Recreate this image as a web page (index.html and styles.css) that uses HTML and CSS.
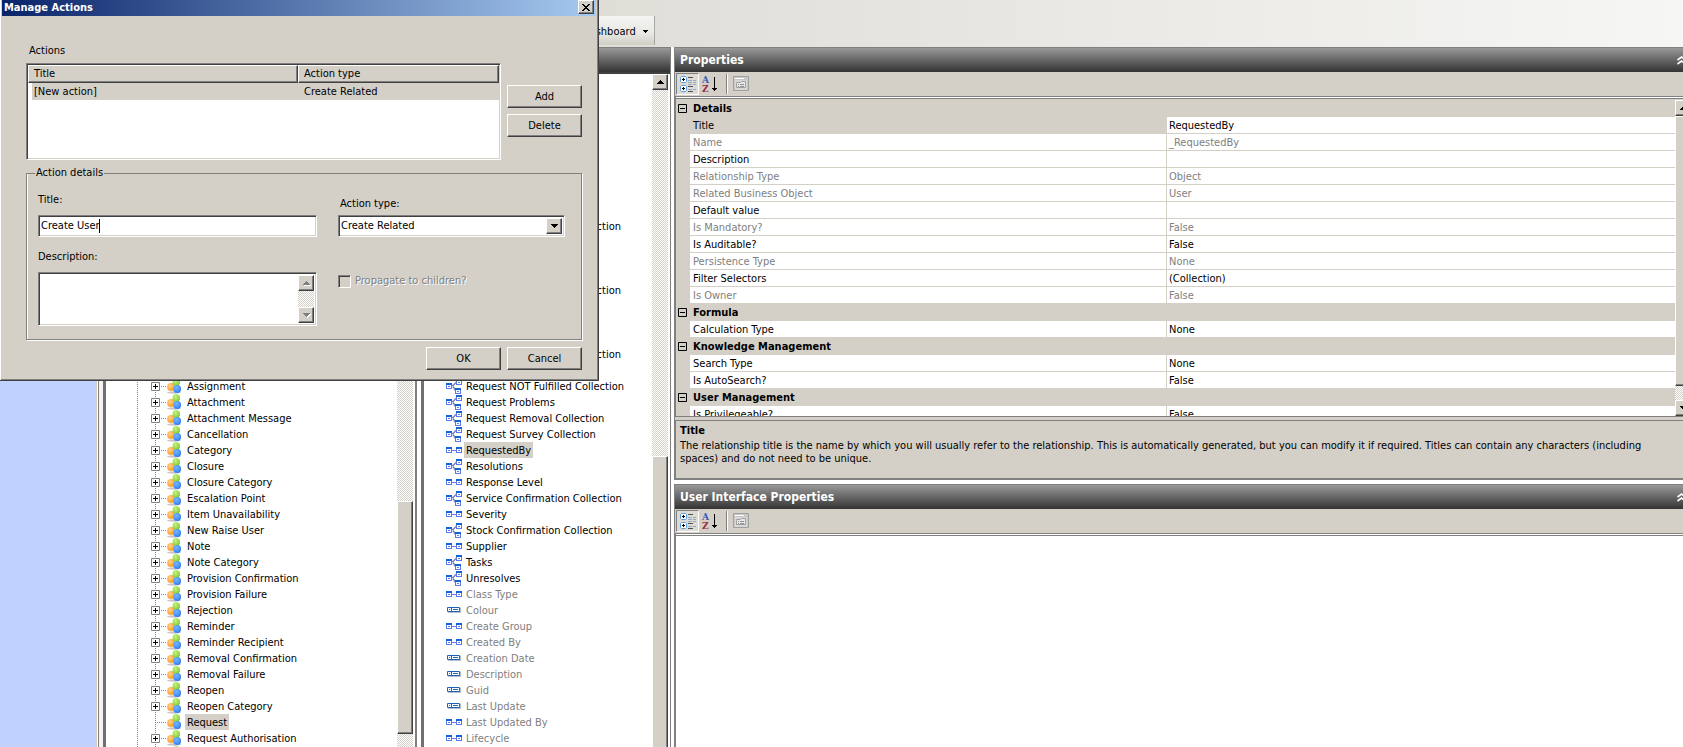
FILE: index.html
```html
<!DOCTYPE html>
<html lang="en">
<head>
<meta charset="utf-8">
<title>Manage Actions</title>
<link rel="stylesheet" href="styles.css">
</head>
<body>
<svg class="defs" aria-hidden="true">
  <defs>
    <radialGradient id="g-green" cx="40%" cy="35%" r="70%"><stop offset="0" stop-color="#c8f080"/><stop offset="1" stop-color="#7ccc2c"/></radialGradient>
    <radialGradient id="g-orange" cx="40%" cy="35%" r="70%"><stop offset="0" stop-color="#ffd088"/><stop offset="1" stop-color="#f8981c"/></radialGradient>
    <radialGradient id="g-blue" cx="40%" cy="35%" r="70%"><stop offset="0" stop-color="#7cb8ff"/><stop offset="1" stop-color="#2c7cf0"/></radialGradient>
    <symbol id="plus" viewBox="0 0 9 9"><path fill="#fff" stroke="#808080" d="M.5.5h8v8h-8z"/><path stroke="#000" d="M2 4.500h5M4.500 2v5"/></symbol>
    <symbol id="minus" viewBox="0 0 9 9"><path fill="none" stroke="#000" d="M.5.5h8v8h-8z"/><path stroke="#000" d="M2 4.500h5"/></symbol>
    <symbol id="balls" viewBox="0 0 16 16"><ellipse cx="8" cy="14.500" rx="7" ry="1.200" fill="#c4c4c8"/><circle cx="5" cy="9" r="3.900" fill="url(#g-orange)"/><circle cx="10.300" cy="4" r="3.800" fill="url(#g-green)"/><circle cx="11.200" cy="11" r="3.900" fill="url(#g-blue)"/></symbol>
    <symbol id="node" viewBox="0 0 6 6"><path fill="#5b7be0" d="M0 0h6v6H0z"/><path fill="#1464d0" d="M0 0h6v2H0z"/><path fill="#fff" d="M1 2h4v3H1z"/><path fill="#5b7be0" d="M2 3h2v1H2z"/></symbol>
    <symbol id="many" viewBox="0 0 16 16"><path fill="none" stroke="#7888c8" stroke-width="1.500" d="M6 7.500h1L10.500 4M7 8.500l2.500 4"/><use href="#node" x="0" y="5" width="6" height="6"/><use href="#node" x="10" y="1" width="6" height="6"/><use href="#node" x="9" y="10" width="6" height="6"/></symbol>
    <symbol id="one" viewBox="0 0 16 16"><path stroke="#5b7be0" d="M6 8.500h4"/><use href="#node" x="0" y="5" width="6" height="6"/><use href="#node" x="10" y="5" width="6" height="6"/></symbol>
    <symbol id="field" viewBox="0 0 16 16"><path fill="#b8bcc4" d="M2 6h13v5H2z"/><path fill="#fff" stroke="#1c68b0" d="M1.500 5.500h12v4h-12zM5.500 6v3"/><path stroke="#1c68b0" d="M3 7.500h1M7 7.500h5"/></symbol>
    <symbol id="cat" viewBox="0 0 18 18"><path fill="#fff" stroke="#5c9cdc" d="M2.500 1.500h4l1 1v4l-1 1h-4l-1-1v-4zM2.500 10.500h4l1 1v4l-1 1h-4l-1-1v-4z"/><path stroke="#000" d="M3 4.500h3M4.500 3v3M3 13.500h3M4.500 12v3"/><path stroke="#505050" d="M9 2.500h5M9 11.500h5M9 16.500h5"/><path stroke="#8cacc8" stroke-dasharray="4 1" d="M9 5.500h8M9 7.500h8M9 9.500h8M9 14.500h8"/></symbol>
    <symbol id="page" viewBox="0 0 16 16"><path fill="#c8c8c8" stroke="#a0a0a0" d="M.5.5h15v14H.5z"/><path fill="#d8d8d8" d="M2 4h12v10H2z"/><path fill="#e8e8e8" stroke="#a0a0a0" d="M3.500 7.500V6.500h4l1-1h4v6h-9z"/><path stroke="#fff" d="M2 2.500h9"/><path stroke="#909090" d="M5 8.500h1M7 8.500h4M5 10.500h1M7 10.500h4"/></symbol>
    <symbol id="up" viewBox="0 0 7 4"><path d="M3 0h1v1h1v1h1v1h1v1H0V3h1V2h1V1h1z"/></symbol>
    <symbol id="down" viewBox="0 0 7 4"><path d="M3 4h1V3h1V2h1V1h1V0H0v1h1v1h1v1h1z"/></symbol>
    <symbol id="chev" viewBox="0 0 9 9"><path fill="none" stroke="#fff" stroke-width="1.600" d="M.5 4l4-3 4 3M.5 8l4-3 4 3"/></symbol>
  </defs>
</svg>

<header class="topbar">
  <button class="tool-menu" type="button"><span>Dashboard</span><svg class="caret" viewBox="0 0 5 3"><path d="M0 0h5v1H4v1H3v1H2V2H1V1H0z"/></svg></button>
</header>

<main class="workspace">
  <nav class="outlook-bar" aria-label="Modules"></nav>

  <section class="pane tree-pane" aria-label="Business objects">
    <div class="pane-head"></div>
    <div class="scroller">
      <ul class="tree">
        <li><svg class="exp"><use href="#plus"/></svg><svg class="ico"><use href="#balls"/></svg><span>Assignment</span></li>
        <li><svg class="exp"><use href="#plus"/></svg><svg class="ico"><use href="#balls"/></svg><span>Attachment</span></li>
        <li><svg class="exp"><use href="#plus"/></svg><svg class="ico"><use href="#balls"/></svg><span>Attachment Message</span></li>
        <li><svg class="exp"><use href="#plus"/></svg><svg class="ico"><use href="#balls"/></svg><span>Cancellation</span></li>
        <li><svg class="exp"><use href="#plus"/></svg><svg class="ico"><use href="#balls"/></svg><span>Category</span></li>
        <li><svg class="exp"><use href="#plus"/></svg><svg class="ico"><use href="#balls"/></svg><span>Closure</span></li>
        <li><svg class="exp"><use href="#plus"/></svg><svg class="ico"><use href="#balls"/></svg><span>Closure Category</span></li>
        <li><svg class="exp"><use href="#plus"/></svg><svg class="ico"><use href="#balls"/></svg><span>Escalation Point</span></li>
        <li><svg class="exp"><use href="#plus"/></svg><svg class="ico"><use href="#balls"/></svg><span>Item Unavailability</span></li>
        <li><svg class="exp"><use href="#plus"/></svg><svg class="ico"><use href="#balls"/></svg><span>New Raise User</span></li>
        <li><svg class="exp"><use href="#plus"/></svg><svg class="ico"><use href="#balls"/></svg><span>Note</span></li>
        <li><svg class="exp"><use href="#plus"/></svg><svg class="ico"><use href="#balls"/></svg><span>Note Category</span></li>
        <li><svg class="exp"><use href="#plus"/></svg><svg class="ico"><use href="#balls"/></svg><span>Provision Confirmation</span></li>
        <li><svg class="exp"><use href="#plus"/></svg><svg class="ico"><use href="#balls"/></svg><span>Provision Failure</span></li>
        <li><svg class="exp"><use href="#plus"/></svg><svg class="ico"><use href="#balls"/></svg><span>Rejection</span></li>
        <li><svg class="exp"><use href="#plus"/></svg><svg class="ico"><use href="#balls"/></svg><span>Reminder</span></li>
        <li><svg class="exp"><use href="#plus"/></svg><svg class="ico"><use href="#balls"/></svg><span>Reminder Recipient</span></li>
        <li><svg class="exp"><use href="#plus"/></svg><svg class="ico"><use href="#balls"/></svg><span>Removal Confirmation</span></li>
        <li><svg class="exp"><use href="#plus"/></svg><svg class="ico"><use href="#balls"/></svg><span>Removal Failure</span></li>
        <li><svg class="exp"><use href="#plus"/></svg><svg class="ico"><use href="#balls"/></svg><span>Reopen</span></li>
        <li><svg class="exp"><use href="#plus"/></svg><svg class="ico"><use href="#balls"/></svg><span>Reopen Category</span></li>
        <li><svg class="exp"></svg><svg class="ico"><use href="#balls"/></svg><span class="picked">Request</span></li>
        <li><svg class="exp"><use href="#plus"/></svg><svg class="ico"><use href="#balls"/></svg><span>Request Authorisation</span></li>
        <li><svg class="exp"></svg><svg class="ico"><use href="#balls"/></svg></li>
      </ul>
      <div class="bar tree-bar"><div class="thumb"></div></div>
    </div>
  </section>

  <section class="pane attr-pane" aria-label="Attributes">
    <div class="pane-head"></div>
    <div class="scroller">
      <ul class="attrs">
        <li class="far">Collection</li>
        <li class="far">Collection</li>
        <li class="far">Collection</li>
        <li class="skip"><svg class="ico"><use href="#many"/></svg><span>Request NOT Fulfilled Collection</span></li>
        <li><svg class="ico"><use href="#many"/></svg><span>Request Problems</span></li>
        <li><svg class="ico"><use href="#many"/></svg><span>Request Removal Collection</span></li>
        <li><svg class="ico"><use href="#many"/></svg><span>Request Survey Collection</span></li>
        <li><svg class="ico"><use href="#one"/></svg><span class="picked">RequestedBy</span></li>
        <li><svg class="ico"><use href="#many"/></svg><span>Resolutions</span></li>
        <li><svg class="ico"><use href="#one"/></svg><span>Response Level</span></li>
        <li><svg class="ico"><use href="#many"/></svg><span>Service Confirmation Collection</span></li>
        <li><svg class="ico"><use href="#one"/></svg><span>Severity</span></li>
        <li><svg class="ico"><use href="#many"/></svg><span>Stock Confirmation Collection</span></li>
        <li><svg class="ico"><use href="#one"/></svg><span>Supplier</span></li>
        <li><svg class="ico"><use href="#many"/></svg><span>Tasks</span></li>
        <li><svg class="ico"><use href="#many"/></svg><span>Unresolves</span></li>
        <li class="dim"><svg class="ico"><use href="#one"/></svg><span>Class Type</span></li>
        <li class="dim"><svg class="ico"><use href="#field"/></svg><span>Colour</span></li>
        <li class="dim"><svg class="ico"><use href="#one"/></svg><span>Create Group</span></li>
        <li class="dim"><svg class="ico"><use href="#one"/></svg><span>Created By</span></li>
        <li class="dim"><svg class="ico"><use href="#field"/></svg><span>Creation Date</span></li>
        <li class="dim"><svg class="ico"><use href="#field"/></svg><span>Description</span></li>
        <li class="dim"><svg class="ico"><use href="#field"/></svg><span>Guid</span></li>
        <li class="dim"><svg class="ico"><use href="#field"/></svg><span>Last Update</span></li>
        <li class="dim"><svg class="ico"><use href="#one"/></svg><span>Last Updated By</span></li>
        <li class="dim"><svg class="ico"><use href="#one"/></svg><span>Lifecycle</span></li>
      </ul>
      <div class="bar attr-bar"><button class="arrow" type="button" aria-label="Scroll up"><svg class="tri"><use href="#up"/></svg></button><div class="thumb"></div></div>
    </div>
  </section>

  <div class="right">
    <section class="props">
      <h2 class="pane-head titled"><span>Properties</span><svg class="chev"><use href="#chev"/></svg></h2>
      <div class="toolbar">
        <button class="tb on" type="button" aria-label="Categorized"><svg class="i18"><use href="#cat"/></svg></button>
        <button class="tb" type="button" aria-label="Alphabetical"><svg class="i18" viewBox="0 0 18 18"><text class="az-a" x="0" y="8">A</text><text class="az-z" x="0" y="17">Z</text><path d="M12 2h1v11h2v1h-1v1h-1v1h-1v-1h-1v-1h-1v-1h2z"/></svg></button>
        <span class="sep"></span>
        <button class="tb" type="button" disabled aria-label="Property pages"><svg class="i16"><use href="#page"/></svg></button>
      </div>
      <div class="gridbox">
        <table class="pgrid">
          <colgroup><col class="c-gut"><col class="c-name"><col></colgroup>
          <tr class="cat"><td><svg class="exp"><use href="#minus"/></svg></td><th colspan="2">Details</th></tr>
          <tr class="sel"><td></td><td>Title</td><td>RequestedBy</td></tr>
          <tr class="dim"><td></td><td>Name</td><td>_RequestedBy</td></tr>
          <tr><td></td><td>Description</td><td></td></tr>
          <tr class="dim"><td></td><td>Relationship Type</td><td>Object</td></tr>
          <tr class="dim"><td></td><td>Related Business Object</td><td>User</td></tr>
          <tr><td></td><td>Default value</td><td></td></tr>
          <tr class="dim"><td></td><td>Is Mandatory?</td><td>False</td></tr>
          <tr><td></td><td>Is Auditable?</td><td>False</td></tr>
          <tr class="dim"><td></td><td>Persistence Type</td><td>None</td></tr>
          <tr><td></td><td>Filter Selectors</td><td>(Collection)</td></tr>
          <tr class="dim"><td></td><td>Is Owner</td><td>False</td></tr>
          <tr class="cat"><td><svg class="exp"><use href="#minus"/></svg></td><th colspan="2">Formula</th></tr>
          <tr><td></td><td>Calculation Type</td><td>None</td></tr>
          <tr class="cat"><td><svg class="exp"><use href="#minus"/></svg></td><th colspan="2">Knowledge Management</th></tr>
          <tr><td></td><td>Search Type</td><td>None</td></tr>
          <tr><td></td><td>Is AutoSearch?</td><td>False</td></tr>
          <tr class="cat"><td><svg class="exp"><use href="#minus"/></svg></td><th colspan="2">User Management</th></tr>
          <tr><td></td><td>Is Privilegeable?</td><td>False</td></tr>
        </table>
        <div class="bar grid-bar"><button class="arrow" type="button" aria-label="Scroll up"><svg class="tri"><use href="#up"/></svg></button><div class="thumb"></div><button class="arrow" type="button" aria-label="Scroll down"><svg class="tri"><use href="#down"/></svg></button></div>
      </div>
      <div class="help">
        <h3>Title</h3>
        <p>The relationship title is the name by which you will usually refer to the relationship. This is automatically generated, but you can modify it if required. Titles can contain any characters (including spaces) and do not need to be unique.</p>
      </div>
    </section>
    <section class="props ui-props">
      <h2 class="pane-head titled"><span>User Interface Properties</span><svg class="chev"><use href="#chev"/></svg></h2>
      <div class="toolbar">
        <button class="tb on" type="button" aria-label="Categorized"><svg class="i18"><use href="#cat"/></svg></button>
        <button class="tb" type="button" aria-label="Alphabetical"><svg class="i18" viewBox="0 0 18 18"><text class="az-a" x="0" y="8">A</text><text class="az-z" x="0" y="17">Z</text><path d="M12 2h1v11h2v1h-1v1h-1v1h-1v-1h-1v-1h-1v-1h2z"/></svg></button>
        <span class="sep"></span>
        <button class="tb" type="button" disabled aria-label="Property pages"><svg class="i16"><use href="#page"/></svg></button>
      </div>
      <div class="blank"></div>
    </section>
  </div>
</main>

<form class="dialog" role="dialog" aria-labelledby="dlg-title">
  <div class="titlebar"><h1 id="dlg-title">Manage Actions</h1><button class="close" type="button" aria-label="Close"><svg viewBox="0 0 8 7"><path d="M0 0h2v1h1v1h2V1h1V0h2v1H7v1H6v1H5v1h1v1h1v1h1v1H6V6H5V5H3v1H2v1H0V6h1V5h1V4h1V3H2V2H1V1H0z"/></svg></button></div>
  <div class="body">
    <h2 class="caption">Actions</h2>
    <div class="top">
      <div class="list">
        <table>
          <colgroup><col class="c-title"><col></colgroup>
          <thead><tr><th>Title</th><th>Action type</th></tr></thead>
          <tbody><tr><td>[New action]</td><td>Create Related</td></tr></tbody>
        </table>
      </div>
      <div class="side"><button class="btn" type="button">Add</button><button class="btn" type="button">Delete</button></div>
    </div>
    <fieldset>
      <legend>Action details</legend>
      <div class="col first">
        <label for="f-title">Title:</label>
        <div class="inset"><input id="f-title" type="text" value="Create User"><span class="cursor"></span></div>
        <label class="lab-desc" for="f-desc">Description:</label>
        <div class="inset area"><textarea id="f-desc"></textarea><div class="bar"><button class="arrow" type="button" disabled aria-label="Scroll up"><svg class="tri"><use href="#up"/></svg></button><button class="arrow" type="button" disabled aria-label="Scroll down"><svg class="tri"><use href="#down"/></svg></button></div></div>
      </div>
      <div class="col second">
        <label for="f-type">Action type:</label>
        <div class="inset combo"><select id="f-type"><option>Create Related</option></select><span class="arrow"><svg class="tri"><use href="#down"/></svg></span></div>
        <div class="check"><input id="f-prop" type="checkbox" disabled><label for="f-prop">Propagate to children?</label></div>
      </div>
    </fieldset>
    <div class="foot"><button class="btn" type="submit">OK</button><button class="btn" type="button">Cancel</button></div>
  </div>
</form>
</body>
</html>
```
FILE: styles.css
```css
* { box-sizing: border-box; }
html, body { height: 100%; }
body {
  margin: 0;
  overflow: hidden;
  position: relative;
  display: flex;
  flex-direction: column;
  background: #fff;
  color: #000;
  font: 11px/16px "DejaVu Sans Condensed", "DejaVu Sans", sans-serif;
}
h1, h2, h3, p, ul { margin: 0; padding: 0; }
ul { list-style: none; }
button, input, textarea, select { font: inherit; color: inherit; margin: 0; padding: 0; border: 0; border-radius: 0; }
svg { display: block; flex: none; }
.defs { position: absolute; width: 0; height: 0; }

.topbar {
  flex: none;
  height: 47px;
  padding: 16px 0 0 536px;
  background: linear-gradient(90deg, #d4d0c8, #f6f6f4);
}
.tool-menu {
  display: flex;
  align-items: center;
  gap: 7px;
  height: 29px;
  padding: 2px 6px 0 46px;
  border-right: 1px solid #a8a8a0;
  background: linear-gradient(#f4f4f2, #e8e8e4 60%, #d0cec4);
}
.caret { width: 5px; height: 3px; }

.workspace { flex: 1; min-height: 0; display: flex; }
.outlook-bar { flex: none; width: 97px; background: #c0d0ff; border-right: 1px solid #d4d0c8; }
.pane { flex: none; display: flex; flex-direction: column; border-right: 1px solid #808080; }
.tree-pane { width: 320px; padding-left: 6px; border-right-width: 2px; background: linear-gradient(90deg, #fff 1px, #808080 1px, #808080 2px, #f4f2f2 2px); }
.attr-pane { width: 254px; padding-left: 4px; }
.pane-head {
  flex: none;
  height: 25px;
  border-top: 1px solid #808080;
  background: linear-gradient(#999, #333);
}
.scroller {
  flex: 1;
  min-height: 0;
  display: flex;
  border: solid #404040;
  border-width: 2px 0 0 3px;
  border-left-color: #707070;
  padding-right: 2px;
  background: #fff;
}
.tree, .attrs { flex: 1; min-width: 0; overflow: hidden; }
.tree li, .attrs li { display: flex; align-items: center; height: 16px; white-space: nowrap; }
.tree { padding: 304px 0 0 31px; background: repeating-linear-gradient(#808080 0 1px, #fff 1px 2px) 31px 0 / 1px 100% no-repeat; }
.tree li {
  padding-left: 14px;
  background:
    repeating-linear-gradient(#808080 0 1px, transparent 1px 2px) 18px 0 / 1px 100% no-repeat,
    repeating-linear-gradient(90deg, #808080 0 1px, transparent 1px 2px) 18px 8px / 12px 1px no-repeat;
}
.exp { width: 9px; height: 9px; }
.ico { width: 16px; height: 16px; }
.tree .ico { margin-left: 6px; }
.tree span, .attrs span { padding: 2px 2px 0; line-height: 14px; }
.tree span { margin-left: 3px; }
.attrs { padding: 144px 0 0 22px; }
.attrs span { margin-left: 2px; }
.attrs .far { padding: 2px 0 0 126px; line-height: 14px; margin-bottom: 48px; }
.attrs .skip { margin-top: -32px; }
.picked { background: #d4d0c8; }
.dim { color: #808080; }

.bar {
  flex: none;
  width: 16px;
  display: flex;
  flex-direction: column;
  background: repeating-conic-gradient(#d4d0c8 0 25%, #fff 0 50%) 0 0 / 2px 2px;
}
.thumb, .arrow, .btn, .close {
  background: #d4d0c8;
  border: 1px solid;
  border-color: #fff #404040 #404040 #fff;
  box-shadow: inset -1px -1px #808080;
}
.arrow { flex: none; width: 16px; height: 16px; display: flex; align-items: center; justify-content: center; }
.tri { width: 7px; height: 4px; }
.arrow:disabled .tri { fill: #808080; filter: drop-shadow(1px 1px 0 #fff); }
.tree-bar .thumb { margin-top: 427px; height: 233px; }
.attr-bar .thumb { margin-top: 366px; flex: 1; border-bottom: 0; box-shadow: inset -1px 0 #808080; }

.right { flex: 1; min-width: 0; margin: 0 -8px 0 3px; display: flex; flex-direction: column; }
.props { display: flex; flex-direction: column; border-left: 1px solid #808080; background: #d4d0c8; }
.props > * { flex: none; }
.titled { display: flex; align-items: center; justify-content: space-between; padding: 0 5px 0 5px; color: #fff; font-size: 12px; font-weight: 700; }
.chev { width: 9px; height: 9px; }
.toolbar { display: flex; align-items: center; height: 24px; padding-left: 1px; }
.tb { display: flex; align-items: center; justify-content: center; width: 23px; height: 22px; background: none; border: 1px solid transparent; }
.tb.on { border-color: #808080 #fff #fff #808080; background: #dedbd5; }
.i18 { width: 18px; height: 18px; }
.i16 { width: 16px; height: 16px; }
.az-a, .az-z { font: 700 9px "DejaVu Serif", serif; }
.az-a { fill: #3858b8; }
.az-z { fill: #983040; }
.sep { width: 2px; height: 20px; margin: 0 1px 0 4px; border-left: 1px solid #808080; border-right: 1px solid #fff; }
.gridbox {
  display: flex;
  height: 321px;
  border: solid #808080;
  border-width: 1px 0 1px 1px;
  box-shadow: inset 0 1px #fff, inset 0 2px #808080;
  padding-top: 3px;
  overflow: hidden;
}
.pgrid { flex: 1; min-width: 0; table-layout: fixed; border-spacing: 0; align-self: flex-start; width: 100%; }
.c-gut { width: 14px; }
.c-name { width: 477px; }
.pgrid td, .pgrid th { height: 17px; padding: 2px 0 0 3px; line-height: 14px; text-align: left; background: #fff; border-bottom: 1px solid #d4d0c8; white-space: nowrap; }
.pgrid td:nth-child(2) { border-right: 1px solid #d4d0c8; }
.pgrid td:first-child, .pgrid .cat th, .pgrid .sel td:nth-child(2) { background: #d4d0c8; }
.pgrid td:first-child { padding: 0 0 0 2px; }
.pgrid td:nth-child(3) { padding-left: 2px; }
.grid-bar .thumb { height: 270px; }
.grid-bar .arrow:last-child { margin-top: auto; }
.help { height: 60px; margin-top: 3px; padding: 2px 12px 0 4px; border: solid #808080; border-width: 1px 0 2px 1px; }
.help h3 { font-size: 11px; }
.help p { line-height: 13px; padding-right: 24px; }
.ui-props { flex: 1; margin-top: 4px; }
.ui-props .blank { flex: 1; background: #fff; border: solid #808080; border-width: 1px 0 0 1px; box-shadow: inset 0 1px #fff, inset 0 2px #808080; }

.dialog {
  position: absolute;
  left: 0;
  top: 0;
  width: 599px;
  padding: 0 1px;
  background: #d4d0c8;
  border: solid #404040;
  border-width: 0 1px 1px 0;
  box-shadow: inset 1px 0 #fff, inset -1px -1px #808080;
}
.titlebar { display: flex; align-items: center; justify-content: space-between; height: 16px; margin: 0 1px; padding: 0 2px; color: #fff; background: linear-gradient(90deg, #0a246a, #a6caf0); }
.titlebar h1 { font-size: 11px; line-height: 14px; padding-bottom: 1px; }
.close { width: 16px; height: 14px; margin-bottom: 2px; padding: 2px 3px; color: #000; }
.close svg { width: 8px; height: 7px; }
.body { padding: 27px 15px 10px 25px; }
.caption { font-size: 11px; font-weight: 400; padding-left: 3px; }
.top { display: flex; justify-content: space-between; margin-top: 4px; }
.list { width: 475px; height: 97px; background: #fff; border: 1px solid; border-color: #808080 #fff #fff #808080; box-shadow: inset 1px 1px #404040, inset -1px -1px #d4d0c8; padding: 1px; }
.list table { width: 100%; table-layout: fixed; border-spacing: 0; }
.c-title { width: 270px; }
.list th { height: 18px; padding: 0 0 0 5px; font-weight: 400; text-align: left; background: #d4d0c8; border: 1px solid; border-color: #fff #404040 #404040 #fff; box-shadow: inset -1px -1px #808080; line-height: 14px; }
.list td { height: 17px; padding: 0 0 0 6px; background: #d4d0c8; line-height: 15px; }
.list td:first-child { border-left: 4px solid #fff; padding-left: 2px; }
.side { display: flex; flex-direction: column; gap: 6px; padding-top: 22px; }
.btn { width: 75px; height: 23px; text-align: center; }
fieldset {
  display: flex;
  gap: 21px;
  min-width: 0;
  margin: 5px 0 0;
  height: 175px;
  padding: 11px 16px 0 11px;
  border: 1px solid #808080;
  box-shadow: 1px 1px #fff, inset 1px 0 #fff;
}
legend { padding: 0 1px; margin-left: -3px; }
.first { flex: none; width: 279px; }
.second { flex: 1; min-width: 0; padding-top: 4px; }
.col label { display: block; }
.inset { display: flex; height: 22px; margin-top: 7px; background: #fff; border: 1px solid; border-color: #808080 #fff #fff #808080; box-shadow: inset 1px 1px #404040, inset -1px -1px #d4d0c8; padding: 2px; position: relative; }
.inset input { flex: 1; min-width: 0; background: transparent; outline: 0; }
.cursor { position: absolute; left: 60px; top: 3px; width: 1px; height: 14px; background: #000; }
.lab-desc { margin-top: 12px; }
.area { height: 54px; }
.area textarea { flex: 1; min-width: 0; resize: none; outline: 0; background: transparent; }
.area .bar { justify-content: space-between; }
.second label { padding-left: 2px; }
.second .inset { margin-top: 3px; }
.combo select { flex: 1; min-width: 0; appearance: none; background: transparent; outline: 0; }
.combo .arrow { pointer-events: none; }
.check { display: flex; align-items: center; gap: 2px; margin-top: 36px; color: #808080; text-shadow: 1px 1px #fff; }
.check input { appearance: none; width: 13px; height: 13px; background: #d4d0c8; border: 1px solid; border-color: #808080 #fff #fff #808080; box-shadow: inset 1px 1px #404040; }
.foot { display: flex; justify-content: flex-end; gap: 6px; margin-top: 7px; }
```
